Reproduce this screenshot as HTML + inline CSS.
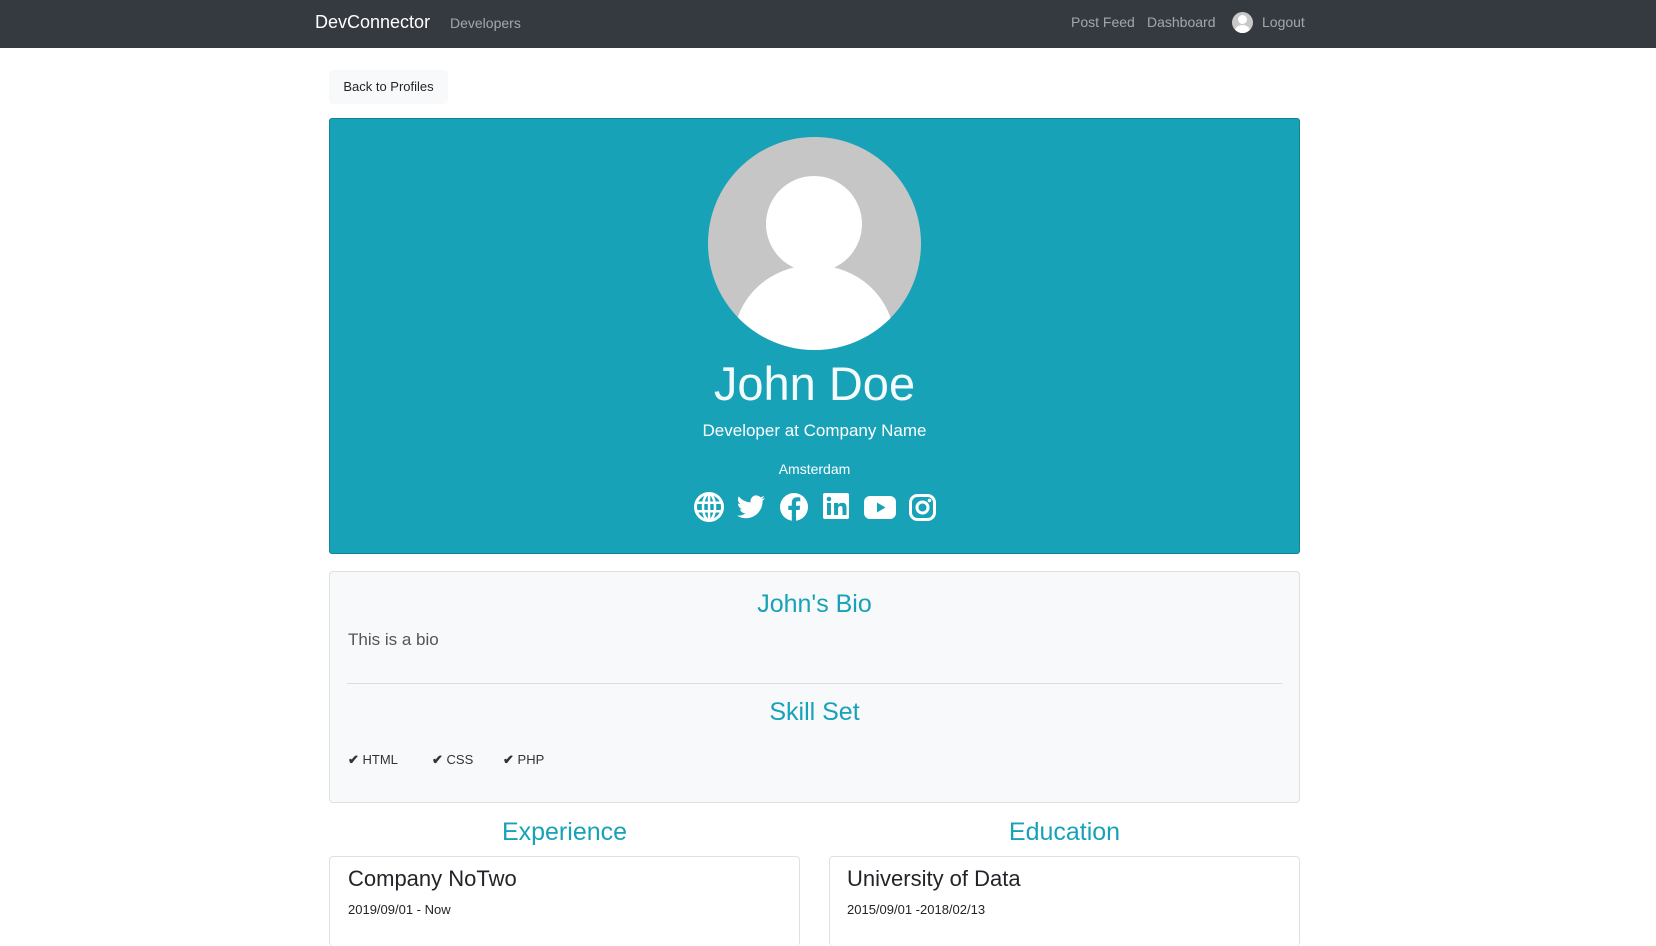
<!DOCTYPE html>
<html><head><meta charset="utf-8"><style>
*{box-sizing:border-box;margin:0;padding:0}
body{width:1656px;height:935px;overflow:hidden;background:#fff;font-family:"Liberation Sans",sans-serif;color:#212529;position:relative}
.nav{position:absolute;left:0;top:0;width:1656px;height:48px;background:#343a40}
.abs{position:absolute;white-space:nowrap}
.nav .b{left:315px;top:12px;font-size:18px;color:#fff}
.nav .l{font-size:14px;color:rgba(255,255,255,.55);top:14px}
.btn{left:329px;top:70px;width:119px;height:34px;background:#f8f9fa;border-radius:4px;font-size:13px;line-height:34px;text-align:center;color:#212529}
.jumbo{left:329px;top:118px;width:971px;height:436px;background:#17a2b8;border:1px solid #138496;border-radius:3px}
.c{text-align:center;color:#fff;left:329px;width:971px}
.card{left:329px;top:571px;width:971px;height:232px;background:#f8f9fa;border:1px solid #dfe0e1;border-radius:4px}
.h{color:#17a2b8;font-size:25px;text-align:center}
.ec{border:1px solid #dfe0e1;border-radius:4px;border-bottom:none;height:90px}
</style></head><body>
<div class="nav">
<div class="abs b">DevConnector</div>
<div class="abs l" style="left:450px;top:15px">Developers</div>
<div class="abs l" style="left:1071px">Post Feed</div>
<div class="abs l" style="left:1147px">Dashboard</div>
<div class="abs" style="left:1232px;top:12px;width:21px;height:21px;border-radius:50%;background:#c8c8c8;overflow:hidden"><div style="position:absolute;left:6px;top:3px;width:9px;height:9px;border-radius:50%;background:#fff"></div><div style="position:absolute;left:3px;top:13px;width:15px;height:12px;border-radius:50%;background:#fff"></div></div>
<div class="abs l" style="left:1262px">Logout</div>
</div>
<div class="abs btn">Back to Profiles</div>
<div class="abs jumbo"></div>
<div class="abs" style="left:708px;top:137px;width:213px;height:213px;border-radius:50%;background:#c6c6c6;overflow:hidden">
<div style="position:absolute;left:58px;top:39px;width:96px;height:96px;border-radius:50%;background:#fff"></div>
<div style="position:absolute;left:26px;top:128px;width:160px;height:150px;border-radius:50%;background:#fff"></div>
</div>
<div class="abs c" style="top:356px;font-size:47px;color:#f4fbfc">John Doe</div>
<div class="abs c" style="top:421px;font-size:17px">Developer at Company Name</div>
<div class="abs c" style="top:461px;font-size:14px">Amsterdam</div>
<svg class="abs" style="left:694px;top:491px" width="244" height="32" viewBox="0 0 244 32" fill="#fff">
<g transform="translate(0,3)"><circle cx="15" cy="13" r="13.5" fill="none" stroke="#fff" stroke-width="3"/><ellipse cx="15" cy="13" rx="6" ry="13" fill="none" stroke="#fff" stroke-width="2.5"/><rect x="1" y="7.5" width="28" height="2.5"/><rect x="1" y="16" width="28" height="2.5"/><rect x="13.8" y="0" width="2.5" height="26"/></g>
<path transform="translate(43,4)" d="M28 3c-1 .5-2.2.8-3.3 1 1.2-.7 2.1-1.9 2.5-3.2-1.1.7-2.4 1.1-3.7 1.4A5.8 5.8 0 0 0 13.6 7.4 16.4 16.4 0 0 1 1.7 1.4a5.8 5.8 0 0 0 1.8 7.7c-.9 0-1.8-.3-2.6-.7 0 2.8 2 5.2 4.6 5.7-.8.2-1.700.3-2.600.1.7 2.3 2.9 4 5.4 4A11.6 11.6 0 0 1 0 20.6 16.4 16.4 0 0 0 8.9 23.2c10.7 0 16.6-8.9 16.6-16.6v-.8C26.6 5 27.4 4.1 28 3z"/>
<g transform="translate(86,2)"><circle cx="14" cy="14" r="14"/><path d="M16 28V17h3.6l.6-4.2H16v-2.6c0-1.2.4-2 2.1-2h2.2V4.5c-.4 0-1.7-.2-3.2-.2-3.2 0-5.3 1.9-5.3 5.4v3.1H8.3V17h3.5v11z" fill="#17a2b8"/></g>
<g transform="translate(129,2)"><rect width="26" height="26" rx="2"/><rect x="4" y="10" width="4" height="12" fill="#17a2b8"/><circle cx="6" cy="6" r="2.3" fill="#17a2b8"/><path d="M11 10h4v2c.7-1.3 2.2-2.3 4.3-2.3 3.5 0 4.2 2.3 4.2 5.3V22h-4v-6c0-1.5-.1-3-2-3s-2.4 1.4-2.4 3v6h-4z" fill="#17a2b8"/></g>
<g transform="translate(170,5)"><rect width="32" height="23" rx="6"/><path d="M13 6.5v10l8.5-5z" fill="#17a2b8"/></g>
<g transform="translate(215,3)"><rect x="1.5" y="1.5" width="24" height="24" rx="7" fill="none" stroke="#fff" stroke-width="3"/><circle cx="13.5" cy="13.5" r="5.5" fill="none" stroke="#fff" stroke-width="3"/><circle cx="20.5" cy="6.5" r="1.8"/></g>
</svg>
<div class="abs card"></div>
<div class="abs h" style="left:329px;width:971px;top:590px">John's Bio</div>
<div class="abs" style="left:348px;top:630px;font-size:17px;color:#555">This is a bio</div>
<div class="abs" style="left:347px;top:683px;width:935px;height:1px;background:#dcdcdc"></div>
<div class="abs h" style="left:329px;width:971px;top:698px">Skill Set</div>
<div class="abs" style="left:348px;top:752px;font-size:13px;color:#333"><b>✔</b> HTML</div>
<div class="abs" style="left:432px;top:752px;font-size:13px;color:#333"><b>✔</b> CSS</div>
<div class="abs" style="left:503px;top:752px;font-size:13px;color:#333"><b>✔</b> PHP</div>
<div class="abs h" style="left:329px;width:471px;top:818px">Experience</div>
<div class="abs h" style="left:829px;width:471px;top:818px">Education</div>
<div class="abs ec" style="left:329px;top:856px;width:471px"></div>
<div class="abs ec" style="left:829px;top:856px;width:471px"></div>
<div class="abs" style="left:348px;top:866px;font-size:22px">Company NoTwo</div>
<div class="abs" style="left:348px;top:902px;font-size:13px">2019/09/01 - Now</div>
<div class="abs" style="left:847px;top:866px;font-size:22px">University of Data</div>
<div class="abs" style="left:847px;top:902px;font-size:13px">2015/09/01 -2018/02/13</div>
</body></html>
